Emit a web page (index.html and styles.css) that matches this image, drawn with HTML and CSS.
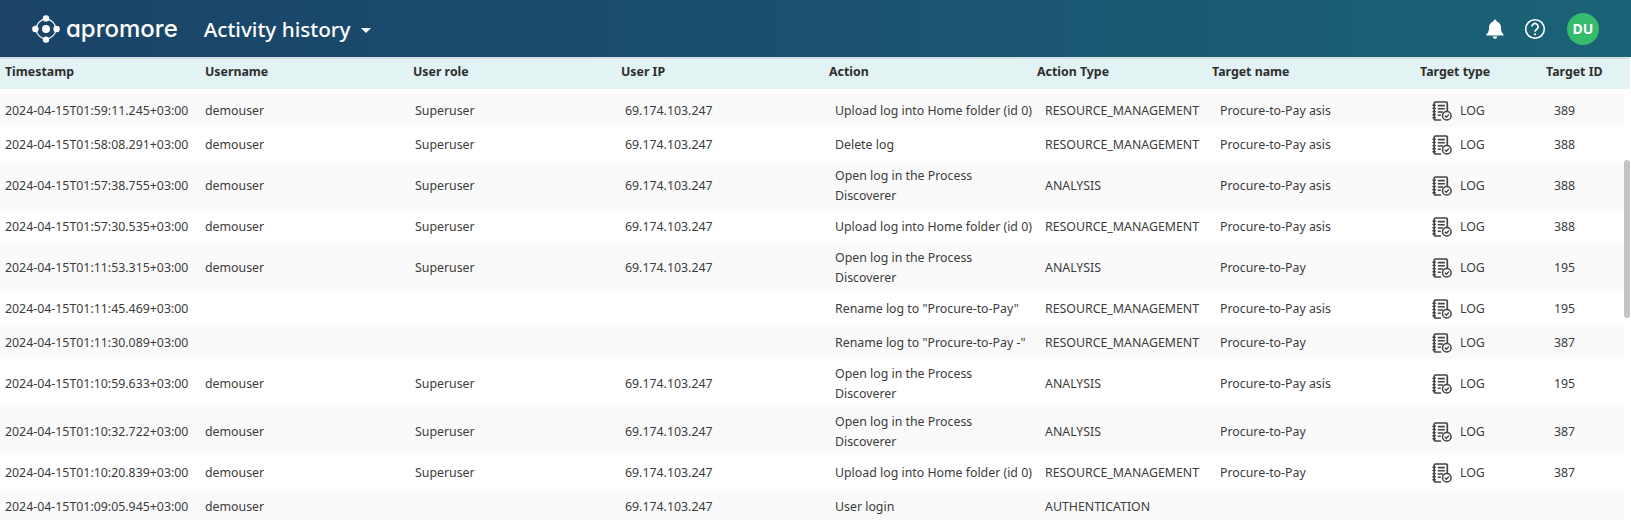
FILE: index.html
```html
<!DOCTYPE html>
<html lang="en">
<head>
<meta charset="utf-8">
<title>Activity history</title>
<link rel="stylesheet" href="styles.css">
</head>
<body>
<svg class="defs" width="0" height="0" aria-hidden="true">
  <symbol id="log" viewBox="0 0 20 20">
    <path d="M3.500 1H14a1.300 1.300 0 0 1 1.300 1.300V10M9 19H3.500a1.300 1.300 0 0 1-1.300-1.300V2.300A1.300 1.300 0 0 1 3.500 1" fill="none" stroke="#444" stroke-width="1.700"/>
    <path d="M.4 4.200h3.400M.4 7.400h3.400M.4 10.600h3.400M.4 13.800h3.400M.4 16.800h3.400" stroke="#444" stroke-width="1.400"/>
    <path d="M5.800 4.600h7M5.800 7.800h7M5.800 11h5.200M5.800 14.200h3" stroke="#444" stroke-width="1.600"/>
    <circle cx="14.800" cy="14.800" r="4.300" fill="#fff" stroke="#444" stroke-width="1.500"/>
    <path d="M12.800 14.800l1.500 1.500 2.600-2.800" fill="none" stroke="#444" stroke-width="1.300"/>
  </symbol>
</svg>
<header class="topbar">
  <div class="brand">
    <svg class="logo" width="28" height="28" viewBox="0 0 28 28" aria-hidden="true">
      <circle cx="14" cy="14" r="9.800" fill="none" stroke="#fff" stroke-width="1.200"/>
      <circle cx="14" cy="14" r="5.900" fill="#1b4467"/>
      <circle cx="14" cy="14" r="4" fill="#fff"/>
      <circle cx="14" cy="3.400" r="3.200" fill="#fff"/>
      <circle cx="14" cy="24.600" r="3.200" fill="#fff"/>
      <circle cx="3.400" cy="14" r="3.200" fill="#fff"/>
      <circle cx="24.600" cy="14" r="3.200" fill="#fff"/>
    </svg>
    <span class="wordmark">apromore</span>
  </div>
  <div class="page-title">Activity history<span class="caret"></span></div>
  <div class="actions">
    <svg class="bell" width="18" height="20" viewBox="0 0 18 20" aria-hidden="true">
      <path d="M9 .6a1.500 1.500 0 0 1 1.500 1.500v.4C13.400 3.200 15 5.600 15 8.600c0 4.300 1.200 5.500 2.500 6.900.3.400.1 1-.5 1H1c-.6 0-.8-.6-.5-1C1.800 14.100 3 12.900 3 8.600c0-3 1.600-5.400 4.500-6.100v-.4A1.500 1.500 0 0 1 9 .6z" fill="#fff"/>
      <path d="M6.800 17.600h4.400a2.200 2.200 0 0 1-4.400 0z" fill="#fff"/>
    </svg>
    <svg class="help" width="22" height="22" viewBox="0 0 22 22" aria-hidden="true">
      <circle cx="11" cy="11" r="9.300" fill="none" stroke="#fff" stroke-width="1.600"/>
      <path d="M7.900 8.600a3.100 3.100 0 1 1 4.800 2.600c-1.100.7-1.700 1.200-1.700 2.600" fill="none" stroke="#fff" stroke-width="1.700"/>
      <circle cx="11" cy="16.300" r="1.100" fill="#fff"/>
    </svg>
    <div class="avatar">DU</div>
  </div>
</header>
<div class="head-row">
  <div>Timestamp</div><div>Username</div><div>User role</div><div>User IP</div><div>Action</div><div>Action Type</div><div>Target name</div><div>Target type</div><div>Target ID</div>
</div>
<main class="rows">
  <div class="row"><div>2024-04-15T01:59:11.245+03:00</div><div>demouser</div><div>Superuser</div><div>69.174.103.247</div><div>Upload log into Home folder (id 0)</div><div>RESOURCE_MANAGEMENT</div><div>Procure-to-Pay asis</div><div class="type"><svg class="log-icon"><use href="#log"/></svg>LOG</div><div>389</div></div>
  <div class="row"><div>2024-04-15T01:58:08.291+03:00</div><div>demouser</div><div>Superuser</div><div>69.174.103.247</div><div>Delete log</div><div>RESOURCE_MANAGEMENT</div><div>Procure-to-Pay asis</div><div class="type"><svg class="log-icon"><use href="#log"/></svg>LOG</div><div>388</div></div>
  <div class="row tall"><div>2024-04-15T01:57:38.755+03:00</div><div>demouser</div><div>Superuser</div><div>69.174.103.247</div><div>Open log in the Process<br>Discoverer</div><div>ANALYSIS</div><div>Procure-to-Pay asis</div><div class="type"><svg class="log-icon"><use href="#log"/></svg>LOG</div><div>388</div></div>
  <div class="row"><div>2024-04-15T01:57:30.535+03:00</div><div>demouser</div><div>Superuser</div><div>69.174.103.247</div><div>Upload log into Home folder (id 0)</div><div>RESOURCE_MANAGEMENT</div><div>Procure-to-Pay asis</div><div class="type"><svg class="log-icon"><use href="#log"/></svg>LOG</div><div>388</div></div>
  <div class="row tall"><div>2024-04-15T01:11:53.315+03:00</div><div>demouser</div><div>Superuser</div><div>69.174.103.247</div><div>Open log in the Process<br>Discoverer</div><div>ANALYSIS</div><div>Procure-to-Pay</div><div class="type"><svg class="log-icon"><use href="#log"/></svg>LOG</div><div>195</div></div>
  <div class="row"><div>2024-04-15T01:11:45.469+03:00</div><div></div><div></div><div></div><div>Rename log to "Procure-to-Pay"</div><div>RESOURCE_MANAGEMENT</div><div>Procure-to-Pay asis</div><div class="type"><svg class="log-icon"><use href="#log"/></svg>LOG</div><div>195</div></div>
  <div class="row"><div>2024-04-15T01:11:30.089+03:00</div><div></div><div></div><div></div><div>Rename log to "Procure-to-Pay -"</div><div>RESOURCE_MANAGEMENT</div><div>Procure-to-Pay</div><div class="type"><svg class="log-icon"><use href="#log"/></svg>LOG</div><div>387</div></div>
  <div class="row tall"><div>2024-04-15T01:10:59.633+03:00</div><div>demouser</div><div>Superuser</div><div>69.174.103.247</div><div>Open log in the Process<br>Discoverer</div><div>ANALYSIS</div><div>Procure-to-Pay asis</div><div class="type"><svg class="log-icon"><use href="#log"/></svg>LOG</div><div>195</div></div>
  <div class="row tall"><div>2024-04-15T01:10:32.722+03:00</div><div>demouser</div><div>Superuser</div><div>69.174.103.247</div><div>Open log in the Process<br>Discoverer</div><div>ANALYSIS</div><div>Procure-to-Pay</div><div class="type"><svg class="log-icon"><use href="#log"/></svg>LOG</div><div>387</div></div>
  <div class="row"><div>2024-04-15T01:10:20.839+03:00</div><div>demouser</div><div>Superuser</div><div>69.174.103.247</div><div>Upload log into Home folder (id 0)</div><div>RESOURCE_MANAGEMENT</div><div>Procure-to-Pay</div><div class="type"><svg class="log-icon"><use href="#log"/></svg>LOG</div><div>387</div></div>
  <div class="row"><div>2024-04-15T01:09:05.945+03:00</div><div>demouser</div><div></div><div>69.174.103.247</div><div>User login</div><div>AUTHENTICATION</div><div></div><div></div><div></div></div>
</main>
<div class="scroll-thumb"></div>
</body>
</html>
```

FILE: styles.css
```css
* { box-sizing: border-box; }
html, body { margin: 0; height: 520px; overflow: hidden; background: #fff; }
body { font-family: "Noto Sans", "Open Sans", sans-serif; font-size: 12.35px; color: #3c3c3c; position: relative; }
.defs { position: absolute; }

.topbar {
  height: 57px;
  display: flex;
  align-items: center;
  padding-left: 32px;
  background: linear-gradient(90deg, #1b4467 0%, #1a4c6d 35%, #1b6377 100%);
  color: #fff;
}
.brand { display: flex; align-items: center; gap: 6px; }
.wordmark { font-family: Inter, sans-serif; font-feature-settings: "cv11"; font-size: 24px; font-weight: 500; line-height: 1; }
.page-title { margin-left: 26px; font-size: 20.7px; font-weight: 500; display: flex; align-items: center; }
.caret { margin: 4px 0 0 10px; width: 0; height: 0; border: 5.5px solid transparent; border-top-color: #fff; border-bottom-width: 0; }
.actions { margin-left: auto; display: flex; align-items: center; padding-right: 32px; }
.help { margin-left: 20px; }
.avatar {
  margin-left: 21px; width: 32px; height: 32px; border-radius: 50%;
  background: #34bb6b; color: #fff; font-size: 14px; font-weight: 700;
  display: flex; align-items: center; justify-content: center;
}

.head-row {
  height: 32px;
  background: #e3f2f3;
  border-top: 2px solid #d4dfe2;
  display: grid;
  grid-template-columns: 200px 208px 208px 208px 208px 175px 208px 126px 85px;
  align-items: center;
  padding: 0 0 6px 5px;
  margin-right: 1px;
  font-weight: 700;
  color: #2e2e2e;
}
.rows { margin-top: 4px; margin-right: 7px; }
.row {
  height: 34px;
  display: grid;
  grid-template-columns: 200px 210px 210px 210px 210px 175px 212px 122px 80px;
  align-items: center;
  padding: 1px 0 0 5px;
}
.row:nth-child(odd) { background: #fafafa; }
.tall { height: 48px; }
.row > div { line-height: 20px; white-space: nowrap; }
.type { display: flex; align-items: center; gap: 8px; }
.log-icon { width: 20px; height: 20px; flex: none; }

.scroll-thumb {
  position: absolute;
  right: 1px; top: 160px;
  width: 6px; height: 158px;
  border-radius: 3px;
  background: #c4c4c4;
}
```
